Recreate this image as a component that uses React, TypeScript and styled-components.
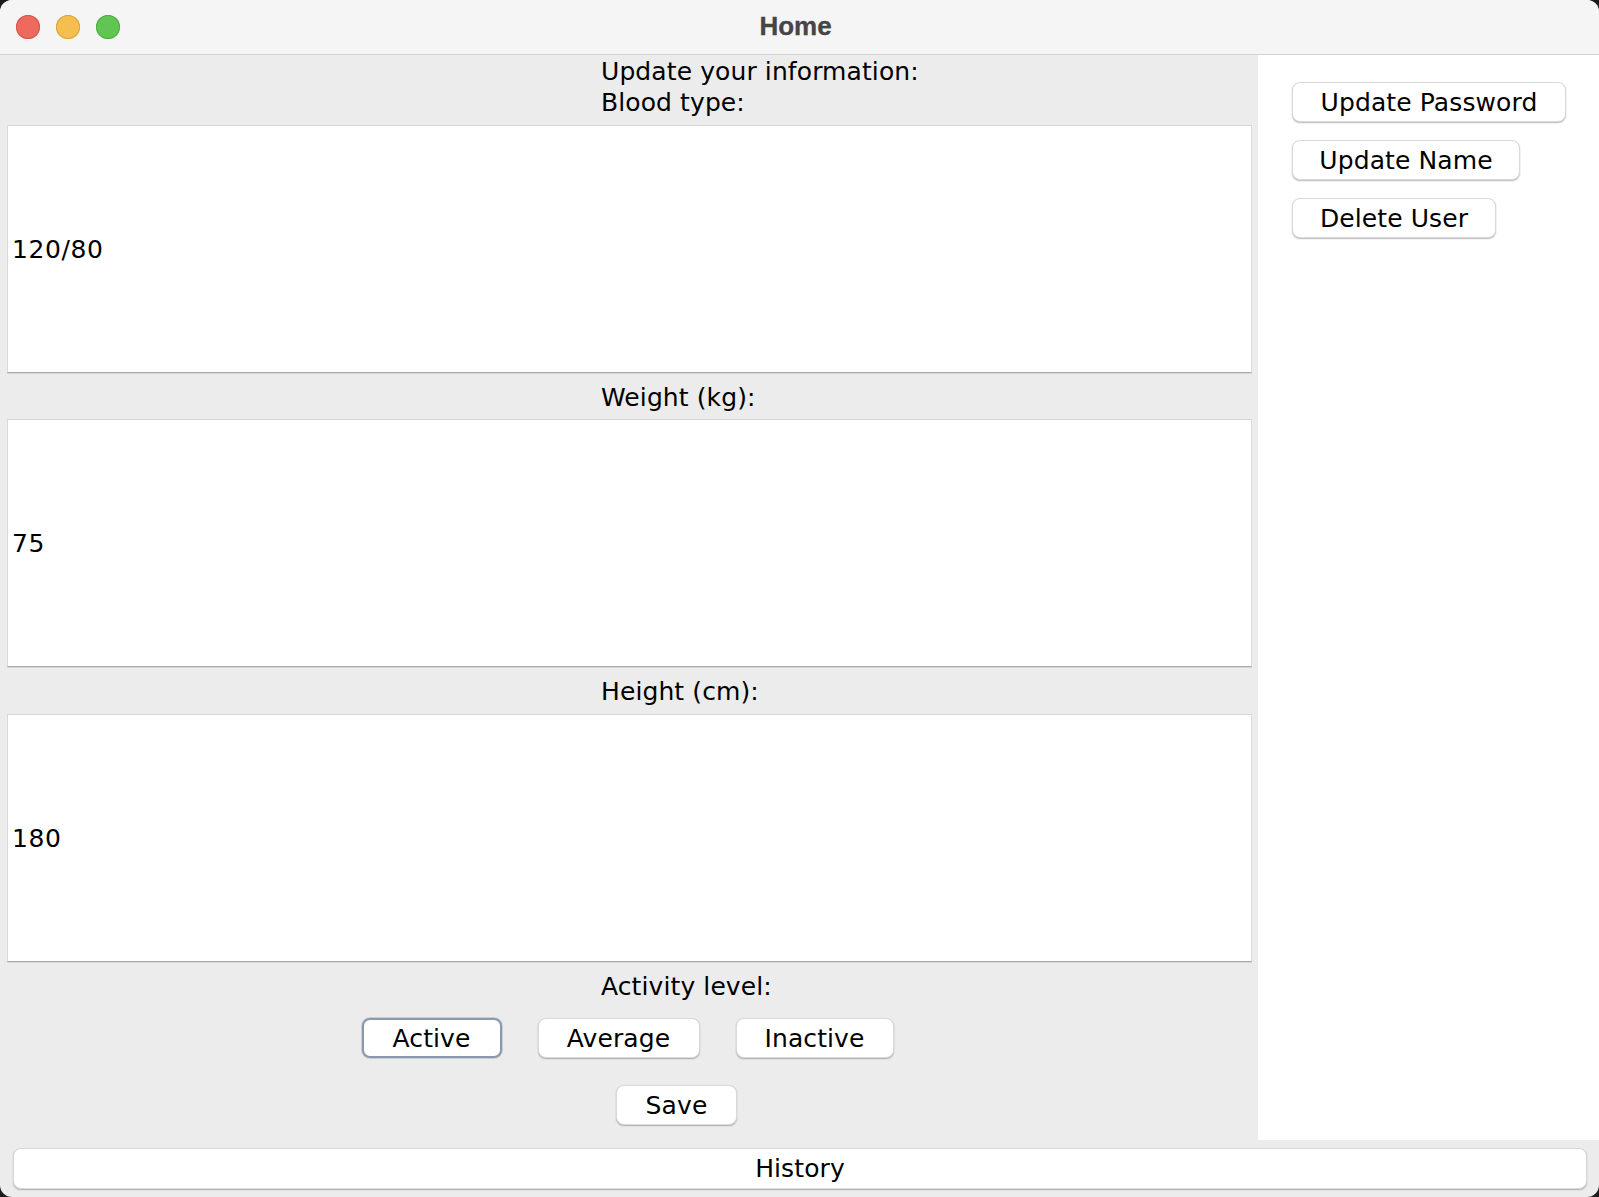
import React from "react";
import styled, { createGlobalStyle } from "styled-components";

const Global = createGlobalStyle`
  html, body { margin: 0; padding: 0; background: #1c1c1e; }
  body { font-family: "DejaVu Sans", "Noto Sans", sans-serif; }
  * { box-sizing: border-box; }
`;

const Window = styled.div`
  width: 1599px;
  height: 1197px;
  background: #ececec;
  border-radius: 12px;
  overflow: hidden;
  display: flex;
  flex-direction: column;
`;

const TitleBar = styled.div`
  height: 55px;
  flex: none;
  background: #f5f5f5;
  border-bottom: 1px solid #d2d2d2;
  display: grid;
  grid-template-columns: 1fr auto 1fr;
  align-items: center;
  padding: 0 0 1px 0;
`;

const Lights = styled.div`
  display: flex;
  gap: 16px;
  align-items: center;
  padding-left: 16px;
`;

const Light = styled.span<{ $c: string; $b: string }>`
  width: 24px;
  height: 24px;
  border-radius: 50%;
  background: ${(p) => p.$c};
  box-shadow: inset 0 0 0 1px ${(p) => p.$b};
`;

const Title = styled.div`
  font-family: "Liberation Sans", Arial, sans-serif;
  font-weight: 700;
  font-size: 26px;
  color: #454545;
  padding-right: 8px;
  -webkit-text-stroke: 0.3px #454545;
`;

const Body = styled.div`
  display: flex;
  height: 1085px;
  flex: none;
`;

const LeftPanel = styled.div`
  width: 1258px;
  flex: none;
  background: #ececec;
  display: flex;
  flex-direction: column;
  padding-top: 1px;
`;

const RightPanel = styled.div`
  flex: 1;
  background: #ffffff;
  display: flex;
  flex-direction: column;
  align-items: flex-start;
  gap: 18px;
  padding: 27px 0 0 34px;
`;

const Text = styled.div`
  font-size: 25px;
  letter-spacing: 0.1px;
  color: #000;
  white-space: nowrap;
`;

const HeaderLabel = styled(Text)`
  line-height: 31px;
  padding: 0 0 7px 601px;
`;

const LabelRow = styled(Text)<{ $h?: number }>`
  height: ${(p) => p.$h ?? 46}px;
  display: flex;
  align-items: center;
  padding-left: 601px;
  padding-top: 2px;
`;

const Field = styled.div`
  height: 248px;
  margin: 0 6px 0 7px;
  background: #fff;
  border-top: 1px solid #d6d6d6;
  border-left: 1px solid #dadada;
  border-right: 1px solid #dadada;
  border-bottom: 1px solid #a8a8a8;
  box-shadow: 0 1px 0 #d8d8d8;
  display: flex;
  align-items: center;
  padding-left: 4px;
  font-size: 25px;
  letter-spacing: 0.6px;
  color: #000;
`;

const Button = styled.button<{ $w: number; $focused?: boolean }>`
  width: ${(p) => p.$w}px;
  height: 40px;
  flex: none;
  background: #fff;
  border: ${(p) => (p.$focused ? "2px solid #8a98ad" : "1px solid #d9d9d9")};
  border-radius: 8px;
  box-shadow: ${(p) =>
    p.$focused ? "0 0 0 1px rgba(120,135,160,0.3)" : "0 1px 1.5px rgba(0,0,0,0.28)"};
  font-family: "DejaVu Sans", "Noto Sans", sans-serif;
  font-size: 25px;
  letter-spacing: 0.1px;
  color: #000;
  padding: 0;
  display: flex;
  align-items: center;
  justify-content: center;
  cursor: default;
`;

const ChoiceRow = styled.div`
  display: flex;
  justify-content: center;
  gap: 36px;
  margin-top: 10px;
  padding-right: 3px;
`;

const SaveRow = styled.div`
  display: flex;
  padding-left: 616px;
  margin-top: 27px;
`;

const Footer = styled.div`
  flex: 1;
  display: flex;
  padding: 8px 12px 0 13px;
`;

const WideButton = styled(Button)`
  width: 100%;
  height: 41px;
`;

export default function App() {
  return (
    <>
      <Global />
      <Window>
        <TitleBar>
          <Lights>
            <Light $c="#ee6a5f" $b="#d5564b" />
            <Light $c="#f5bf4f" $b="#d8a33a" />
            <Light $c="#61c554" $b="#4ead43" />
          </Lights>
          <Title>Home</Title>
          <div />
        </TitleBar>
        <Body>
          <LeftPanel>
            <HeaderLabel>
              Update your information:
              <br />
              Blood type:
            </HeaderLabel>
            <Field>120/80</Field>
            <LabelRow>Weight (kg):</LabelRow>
            <Field>75</Field>
            <LabelRow $h={47}>Height (cm):</LabelRow>
            <Field>180</Field>
            <LabelRow>Activity level:</LabelRow>
            <ChoiceRow>
              <Button $w={140} $focused>Active</Button>
              <Button $w={162}>Average</Button>
              <Button $w={158}>Inactive</Button>
            </ChoiceRow>
            <SaveRow>
              <Button $w={121}>Save</Button>
            </SaveRow>
          </LeftPanel>
          <RightPanel>
            <Button $w={274}>Update Password</Button>
            <Button $w={228}>Update Name</Button>
            <Button $w={204}>Delete User</Button>
          </RightPanel>
        </Body>
        <Footer>
          <WideButton $w={0}>History</WideButton>
        </Footer>
      </Window>
    </>
  );
}
